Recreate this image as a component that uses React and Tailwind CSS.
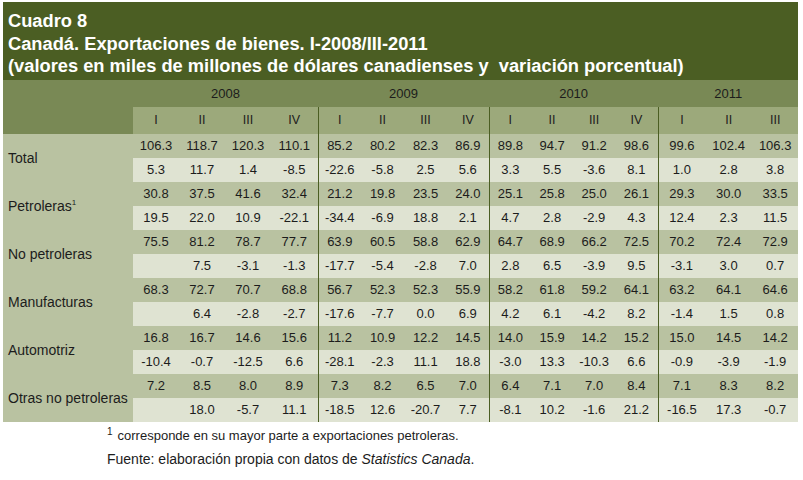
import React from "react";

const cols = [
  "w-[46px]", "w-[46px]", "w-[46px]", "w-[47px]",
  "w-[43px]", "w-[43px]", "w-[43px]", "w-[42px]",
  "w-[42px]", "w-[42px]", "w-[42px]", "w-[43px]",
  "w-[47px]", "w-[47px]", "w-[46px]",
];

const years = [
  { year: "2008", span: 4 },
  { year: "2009", span: 4 },
  { year: "2010", span: 4 },
  { year: "2011", span: 3 },
];

const quarters = ["I", "II", "III", "IV", "I", "II", "III", "IV", "I", "II", "III", "IV", "I", "II", "III"];

// first column of each year gets the dark divider
const groupStart = [4, 8, 12];

const rows = [
  {
    label: "Total",
    values: "106.3 118.7 120.3 110.1 85.2 80.2 82.3 86.9 89.8 94.7 91.2 98.6 99.6 102.4 106.3",
    change: "5.3 11.7 1.4 -8.5 -22.6 -5.8 2.5 5.6 3.3 5.5 -3.6 8.1 1.0 2.8 3.8",
  },
  {
    label: "Petroleras",
    sup: true,
    values: "30.8 37.5 41.6 32.4 21.2 19.8 23.5 24.0 25.1 25.8 25.0 26.1 29.3 30.0 33.5",
    change: "19.5 22.0 10.9 -22.1 -34.4 -6.9 18.8 2.1 4.7 2.8 -2.9 4.3 12.4 2.3 11.5",
  },
  {
    label: "No petroleras",
    values: "75.5 81.2 78.7 77.7 63.9 60.5 58.8 62.9 64.7 68.9 66.2 72.5 70.2 72.4 72.9",
    change: "_ 7.5 -3.1 -1.3 -17.7 -5.4 -2.8 7.0 2.8 6.5 -3.9 9.5 -3.1 3.0 0.7",
  },
  {
    label: "Manufacturas",
    values: "68.3 72.7 70.7 68.8 56.7 52.3 52.3 55.9 58.2 61.8 59.2 64.1 63.2 64.1 64.6",
    change: "_ 6.4 -2.8 -2.7 -17.6 -7.7 0.0 6.9 4.2 6.1 -4.2 8.2 -1.4 1.5 0.8",
  },
  {
    label: "Automotriz",
    values: "16.8 16.7 14.6 15.6 11.2 10.9 12.2 14.5 14.0 15.9 14.2 15.2 15.0 14.5 14.2",
    change: "-10.4 -0.7 -12.5 6.6 -28.1 -2.3 11.1 18.8 -3.0 13.3 -10.3 6.6 -0.9 -3.9 -1.9",
  },
  {
    label: "Otras no petroleras",
    values: "7.2 8.5 8.0 8.9 7.3 8.2 6.5 7.0 6.4 7.1 7.0 8.4 7.1 8.3 8.2",
    change: "_ 18.0 -5.7 11.1 -18.5 12.6 -20.7 7.7 -8.1 10.2 -1.6 21.2 -16.5 17.3 -0.7",
  },
];

const split = (s) => s.split(" ").map((v) => (v === "_" ? "" : v));

function DataCells({ list, light }) {
  return list.map((v, i) => (
    <td
      key={i}
      className={`p-0 text-center ${light ? "bg-[#dfe3d2]" : "bg-[#b9c2a1]"} ${
        groupStart.includes(i) ? "border-l border-[#4b5e23]" : ""
      }`}
    >
      {v}
    </td>
  ));
}

export default function App() {
  return (
    <div className="w-[803px] h-[480px] bg-white pt-[2px] pl-[3px] text-[#1c1c1c] font-['Liberation_Sans',Arial,sans-serif]">
      <div className="w-[795px]">
        <div className="bg-[#4b5e23] text-white font-bold text-[18.3px] leading-[22.5px] pl-[5px] pt-[8px] h-[78px]">
          <div>Cuadro 8</div>
          <div>Canadá. Exportaciones de bienes. I-2008/III-2011</div>
          <div className="whitespace-pre">
            (valores en miles de millones de dólares canadienses y  variación porcentual)
          </div>
        </div>

        <table className="border-collapse table-fixed w-[795px] text-[13px]">
          <colgroup>
            <col className="w-[130px]" />
            {cols.map((c, i) => (
              <col key={i} className={c} />
            ))}
          </colgroup>
          <thead>
            <tr className="h-[27px]">
              <th rowSpan={2} className="bg-[#798955] p-0"></th>
              {years.map((y) => (
                <th
                  key={y.year}
                  colSpan={y.span}
                  className="bg-[#798955] p-0 font-normal text-[13px] text-center"
                >
                  {y.year}
                </th>
              ))}
            </tr>
            <tr className="h-[27px]">
              {quarters.map((q, i) => (
                <th
                  key={i}
                  className={`bg-[#9ca97b] p-0 font-normal text-[12.5px] text-center ${
                    groupStart.includes(i) ? "border-l border-[#4b5e23]" : ""
                  }`}
                >
                  {q}
                </th>
              ))}
            </tr>
          </thead>
          <tbody>
            {rows.map((r) => (
              <React.Fragment key={r.label}>
                <tr className="h-[24px]">
                  <td rowSpan={2} className="bg-[#b9c2a1] p-0 pl-[5px] text-[14px] align-middle whitespace-nowrap">
                    {r.label}
                    {r.sup && <span className="text-[8px] relative -top-[6px]">1</span>}
                  </td>
                  <DataCells list={split(r.values)} />
                </tr>
                <tr className="h-[24px]">
                  <DataCells list={split(r.change)} light />
                </tr>
              </React.Fragment>
            ))}
          </tbody>
        </table>
      </div>

      <div className="pl-[104px] pt-[3px] leading-[22px]">
        <div className="text-[13px]">
          <span className="text-[10px] relative -top-[5px] mr-[5px]">1</span>corresponde en su mayor parte a exportaciones petroleras.
        </div>
        <div className="text-[14px]">
          Fuente: elaboración propia con datos de <i>Statistics Canada</i>.
        </div>
      </div>
    </div>
  );
}
